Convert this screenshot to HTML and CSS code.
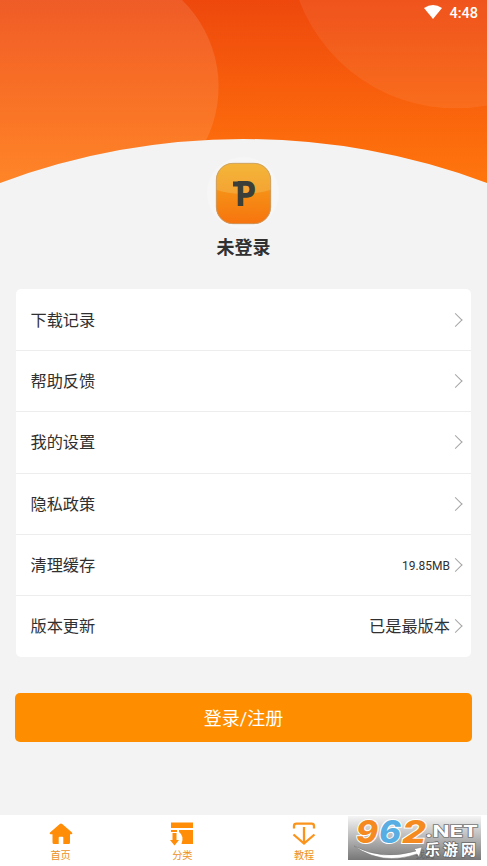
FILE: index.html
```html
<!DOCTYPE html>
<html lang="zh-CN">
<head>
<meta charset="utf-8">
<title>我的</title>
<link rel="stylesheet" href="styles.css">
</head>
<body>
<div class="screen">
  <svg class="backdrop" viewBox="0 0 487 190" aria-hidden="true">
    <defs>
      <linearGradient id="sky" x1="0" y1="0" x2="0" y2="1"><stop offset="0" stop-color="#ee480d"/><stop offset="0.5" stop-color="#f85f0c"/><stop offset="1" stop-color="#ff760d"/></linearGradient>
    </defs>
    <path d="M0 0H487V183A696 696 0 0 0 0 183Z" fill="url(#sky)"/>
    <path d="M0 0H182A121 121 0 0 1 206 140.500A696 696 0 0 0 0 183Z" fill="#fff" opacity=".11"/>
    <path d="M299 0A168 168 0 0 0 487 105.5V0Z" fill="#fff" opacity=".065"/>
  </svg>
  <header class="status">
    <svg width="18" height="14" viewBox="0 0 18 14"><path d="M0 3Q9-3 18 3L9 14Z" fill="#fff"/></svg>
    <span class="clock">4:48</span>
  </header>
  <section class="profile">
    <svg class="avatar" width="74" height="74" viewBox="0 0 74 74">
      <defs>
        <linearGradient id="app" x1="0" y1="0" x2="0" y2="1"><stop offset="0" stop-color="#f6a81d"/><stop offset="1" stop-color="#f6740e"/></linearGradient>
        <clipPath id="tile"><rect x="10" y="7" width="55" height="61" rx="17"/></clipPath>
      </defs>
      <circle cx="37" cy="37" r="36" fill="#f6f6f6"/>
      <rect x="10" y="7" width="55" height="61" rx="17" fill="url(#app)"/>
      <path clip-path="url(#tile)" d="M8 5H67V33Q37 43 8 33Z" fill="#f1dc83" opacity=".28"/>
      <rect x="27" y="25.500" width="6" height="5" fill="#3b3e39"/>
      <text class="logo" x="29" y="50" textLength="21" lengthAdjust="spacingAndGlyphs">P</text>
      <rect x="10.300" y="7.300" width="54.400" height="60.400" rx="17" fill="none" stroke="#c2a176" stroke-width=".8"/>
    </svg>
    <h1 class="name">未登录</h1>
  </section>
  <ul class="menu">
    <li class="row"><span>下载记录</span><i class="arrow"></i></li>
    <li class="row"><span>帮助反馈</span><i class="arrow"></i></li>
    <li class="row"><span>我的设置</span><i class="arrow"></i></li>
    <li class="row"><span>隐私政策</span><i class="arrow"></i></li>
    <li class="row"><span>清理缓存</span><span class="size">19.85MB</span><i class="arrow"></i></li>
    <li class="row"><span>版本更新</span><span class="value">已是最版本</span><i class="arrow"></i></li>
  </ul>
  <button class="login">登录/注册</button>
  <nav class="tabs">
    <div class="tab">
      <svg width="24" height="24" viewBox="0 0 24 24"><path d="M12 1.500Q12.600 1.500 13.200 2L23 10.500Q24 12 22.500 12.200H21V20.500Q21 22 19.500 22H14.300V15.500Q14.300 14.700 13.500 14.700H10.500Q9.700 14.700 9.700 15.500V22H5Q3.500 22 3.500 20.500V12.200H1.500Q0 12 1 10.500L10.800 2Q11.400 1.500 12 1.500Z" fill="#ff8d08"/></svg>
      <span>首页</span>
    </div>
    <div class="tab">
      <svg width="24" height="24" viewBox="0 0 24 24" fill="#ff8d08"><path d="M1 .5H23V6H1ZM1 8H7V10H1ZM9 8H23V22H11.500Q14.500 14 9 10ZM2.500 11H6.500V18H9L4.500 23.500L0 18H2.500Z"/></svg>
      <span>分类</span>
    </div>
    <div class="tab">
      <svg width="24" height="24" viewBox="0 0 24 24" fill="none" stroke="#fa941c" stroke-width="2.300"><path d="M2 6.500V4Q2 1.700 4.500 1.700H19.500Q22 1.700 22 4V6.500M12 5V21M1.500 12.500L12 21.500L22.500 12.500"/></svg>
      <span>教程</span>
    </div>
    <div class="tab"></div>
    <svg class="mark" width="133" height="44" viewBox="0 0 133 44">
      <defs><linearGradient id="silver" x1="0" y1="0" x2="0" y2="1"><stop offset="0" stop-color="#f5f5f5"/><stop offset=".45" stop-color="#bdbdbd"/><stop offset="1" stop-color="#777"/></linearGradient></defs>
      <rect width="133" height="44" fill="url(#silver)"/>
      <text class="under" x="67" y="42">我的</text>
      <path d="M6 30Q34 45 68 35L66 33L74 31L71 41L69 38Q34 50 6 30Z" fill="#fff" stroke="#777" stroke-width=".5"/>
      <g class="digits"><text x="8" y="27" textLength="22" lengthAdjust="spacingAndGlyphs" fill="#f58b20">9</text><text x="31" y="27" textLength="22" lengthAdjust="spacingAndGlyphs" fill="#58aee2">6</text><text x="54" y="27" textLength="24" lengthAdjust="spacingAndGlyphs" fill="#f58b20">2</text></g>
      <text class="net" x="77" y="21" textLength="53" lengthAdjust="spacingAndGlyphs">.NET</text>
      <text class="site" x="77" y="39" textLength="51">乐游网</text>
    </svg>
  </nav>
</div>
</body>
</html>
```

FILE: styles.css
```css
* { box-sizing: border-box; }
body { margin: 0; font-family: Roboto, "Noto Sans CJK SC", sans-serif; color: #303030; background: #fff; }
.screen { position: relative; width: 487px; height: 866px; overflow: hidden; display: flex; flex-direction: column; background: #f3f3f3; }
.backdrop { position: absolute; left: 0; top: 0; width: 487px; height: 190px; }
.status { position: relative; height: 26px; flex: none; display: flex; justify-content: flex-end; align-items: center; gap: 7px; padding-right: 9px; color: #fff; }
.status svg { margin-bottom: 3px; }
.clock { font-size: 14.500px; font-weight: 500; line-height: 24px; padding-top: 2px; }
.profile { position: relative; flex: none; height: 263px; padding-top: 130px; display: flex; flex-direction: column; align-items: center; }
.avatar { display: block; margin-right: 1px; }
.logo { font: 700 33.500px "DejaVu Sans", sans-serif; fill: #3b3e39; }
.name { margin: 4px 0 0; font-size: 18px; line-height: 27px; font-weight: 700; }
.menu { list-style: none; flex: none; margin: 0 16px; padding: 1px 0 0; height: 368px; background: #fff; border-radius: 5px; display: grid; grid-template-rows: repeat(6, 1fr); }
.row { display: flex; align-items: center; padding: 2px 8px 0 14.500px; font-size: 16.200px; line-height: 24px; border-bottom: 1px solid #ededed; }
.row:last-child { border-bottom: 0; }
.row span:first-child { margin-right: auto; }
.size { font-size: 12px; margin-right: 3px; }
.value { margin-right: 3px; }
.arrow { width: 10px; height: 10px; border: solid #a5a5a5; border-width: 1.500px 1.500px 0 0; transform: translate(-2.500px, -1px) rotate(45deg); }
.login { flex: none; height: 49px; margin: 36px 15px 0; padding: 2px 0 0; border: 0; border-radius: 5px; background: #ff8d00; color: #fff; font: 18px/47px Roboto, "Noto Sans CJK SC", sans-serif; }
.tabs { position: relative; flex: none; margin-top: 73px; height: 51px; padding-top: 7px; background: #fff; display: grid; grid-template-columns: repeat(4, 1fr); }
.tab { display: flex; flex-direction: column; align-items: center; margin-left: -.5px; font-size: 10.200px; line-height: 14px; color: #ed9124; }
.tab svg { flex: none; margin-bottom: 3px; }
.mark { position: absolute; left: 348px; top: 1px; overflow: visible; }
.under { font-size: 10px; fill: #666; }
.digits { font: italic 800 31px Inter, "Liberation Sans", sans-serif; stroke: #fff; stroke-width: 2px; paint-order: stroke; }
.net { font: 700 16px Inter, "Liberation Sans", sans-serif; fill: #fff; stroke: #777; stroke-width: 1.500px; paint-order: stroke; }
.site { font: 700 15px "Noto Sans CJK SC", sans-serif; fill: #fff; stroke: #666; stroke-width: 1.500px; paint-order: stroke; }
```
